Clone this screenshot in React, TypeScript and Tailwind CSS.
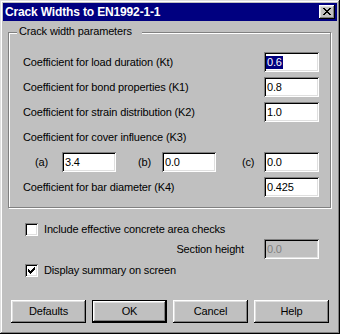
import React from "react";

const raised =
  "shadow-[inset_-1px_-1px_0_#000,inset_1px_1px_0_#fff,inset_-2px_-2px_0_#808080,inset_2px_2px_0_#dfdfdf]";
const sunken =
  "shadow-[inset_1px_1px_0_#808080,inset_-1px_-1px_0_#fff,inset_2px_2px_0_#000,inset_-2px_-2px_0_#dfdfdf]";

function Field({ value, w = "w-[55px]", selected = false, disabled = false }: { value: string; w?: string; selected?: boolean; disabled?: boolean }) {
  return (
    <div className={`${w} h-[20px] flex items-center pl-[3px] ${sunken} ${disabled ? "bg-[#c0c0c0] text-[#808080]" : "bg-white"}`}>
      {selected ? <span className="bg-[#000080] text-white leading-[13px] px-[1px] -ml-[1px]">{value}</span> : <span>{value}</span>}
    </div>
  );
}

function Row({ label, value, selected }: { label: string; value: string; selected?: boolean }) {
  return (
    <div className="h-[20px] flex items-center justify-between">
      <span>{label}</span>
      <Field value={value} selected={selected} />
    </div>
  );
}

function Check({ checked, label }: { checked?: boolean; label: string }) {
  return (
    <div className="h-[13px] flex items-center ml-[22px]">
      <div className={`w-[13px] h-[13px] bg-white ${sunken} flex items-center justify-center`}>
        {checked && (
          <svg width="7" height="7" viewBox="0 0 7 7" shapeRendering="crispEdges">
            <path d="M6 0h1v3h-1v1h-1v1h-1v1h-1v1h-1v-1h-1v-1h-1v-3h1v1h1v1h1v-1h1v-1h1z" fill="#000" />
          </svg>
        )}
      </div>
      <span className="ml-[6px]">{label}</span>
    </div>
  );
}

function Button({ label, def = false }: { label: string; def?: boolean }) {
  return (
    <div className={`w-[75px] h-[23px] flex items-center justify-center ${def ? "border border-black" : ""}`}>
      <div className={`w-full h-full flex items-center justify-center ${raised}`}>{label}</div>
    </div>
  );
}

export default function App() {
  return (
    <div className="w-[340px] h-[334px] bg-[#c0c0c0] p-[3px] font-['Liberation_Sans',Arial,sans-serif] text-[11px] tracking-[-0.15px] text-black shadow-[inset_-1px_-1px_0_#000,inset_1px_1px_0_#dfdfdf,inset_-2px_-2px_0_#808080,inset_2px_2px_0_#fff] flex flex-col">
      {/* title bar */}
      <div className="h-[18px] bg-[#000080] flex items-center justify-between pl-[2px] pr-[2px]">
        <span className="text-white font-bold text-[12px] tracking-[-0.15px]">Crack Widths to EN1992-1-1</span>
        <div className={`w-[16px] h-[14px] bg-[#c0c0c0] ${raised} flex items-center justify-center pb-[1px]`}>
          <svg width="8" height="7" viewBox="0 0 8 7" shapeRendering="crispEdges">
            <path d="M0 0h2v1h1v1h2v-1h1v-1h2v1h-1v1h-1v1h-1v1h1v1h1v1h1v1h-2v-1h-1v-1h-2v1h-1v1h-2v-1h1v-1h1v-1h1v-1h-1v-1h-1v-1h-1z" fill="#000" />
          </svg>
        </div>
      </div>

      {/* group box */}
      <div className="relative mt-[11px] ml-[5px] w-[323px] h-[176px] border border-[#808080] shadow-[inset_1px_1px_0_#fff,1px_1px_0_#fff] pt-[19px] pl-[14px] pr-[11px] flex flex-col gap-[5px]">
        <span className="absolute left-[8px] -top-[8px] bg-[#c0c0c0] pl-[2px] pr-[10px] leading-[13px]">Crack width parameters</span>
        <Row label="Coefficient for load duration (Kt)" value="0.6" selected />
        <Row label="Coefficient for bond properties (K1)" value="0.8" />
        <Row label="Coefficient for strain distribution (K2)" value="1.0" />
        <div className="h-[20px] flex items-center">Coefficient for cover influence (K3)</div>
        <div className="h-[20px] flex items-center pl-[12px]">
          <span className="w-[27px]">(a)</span>
          <Field value="3.4" w="w-[54px]" />
          <span className="ml-[22px] w-[24px]">(b)</span>
          <Field value="0.0" w="w-[54px]" />
          <span className="ml-[26px] w-[22px]">(c)</span>
          <Field value="0.0" />
        </div>
        <Row label="Coefficient for bar diameter (K4)" value="0.425" />
      </div>

      <div className="mt-[15px]">
        <Check label="Include effective concrete area checks" />
      </div>
      <div className="mt-[3px] h-[20px] flex items-center justify-end pr-[18px]">
        <span className="mr-[20px]">Section height</span>
        <Field value="0.0" disabled />
      </div>
      <div className="mt-[5px]">
        <Check checked label="Display summary on screen" />
      </div>

      <div className="mt-[23px] ml-[8px] flex gap-[6px]">
        <Button label="Defaults" />
        <Button label="OK" def />
        <Button label="Cancel" />
        <Button label="Help" />
      </div>
    </div>
  );
}
